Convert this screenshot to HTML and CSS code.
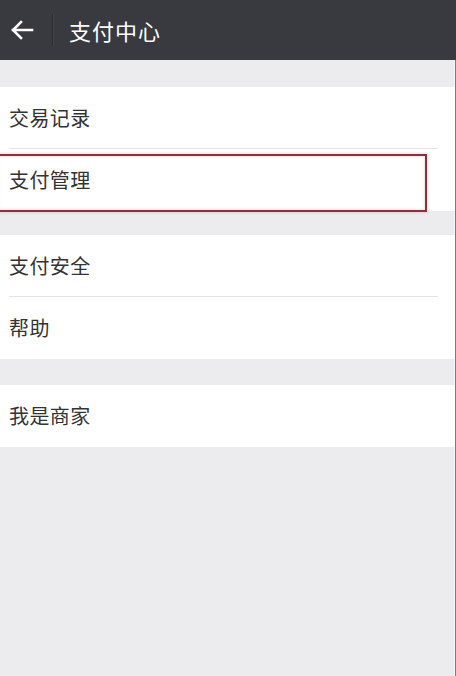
FILE: index.html
```html
<!DOCTYPE html>
<html lang="zh-CN">
<head>
<meta charset="utf-8">
<title>支付中心</title>
<link rel="stylesheet" href="styles.css">
</head>
<body>
<header class="topbar">
  <div class="back">
    <svg width="24" height="22" viewBox="0 0 24 22" aria-hidden="true">
      <path d="M22 11H3 M11 3L3 11L11 19" fill="none" stroke="#ffffff" stroke-width="2.6" stroke-linecap="square" stroke-linejoin="miter"/>
    </svg>
  </div>
  <div class="sep"></div>
  <h1 class="title">支付中心</h1>
</header>
<main class="content">
  <section class="group g1">
    <div class="row"><span class="label">交易记录</span></div>
    <div class="row last highlight"><span class="label">支付管理</span><div class="mark"></div></div>
  </section>
  <section class="group g2">
    <div class="row"><span class="label">支付安全</span></div>
    <div class="row last"><span class="label">帮助</span></div>
  </section>
  <section class="group g3">
    <div class="row last"><span class="label">我是商家</span></div>
  </section>
</main>
</body>
</html>
```
FILE: styles.css
```css
html, body {
  margin: 0;
  padding: 0;
  height: 100%;
}
body {
  background: #ecebed;
  font-family: "Noto Sans CJK SC", "Noto Sans", sans-serif;
  overflow: hidden;
}
.topbar {
  height: 60px;
  background: #393a3f;
  display: flex;
  align-items: center;
}
.back {
  width: 32px;
  padding-left: 10px;
  display: flex;
  align-items: center;
  height: 100%;
}
.back svg {
  display: block;
}
.sep {
  width: 1px;
  height: 32px;
  background: #2c2d31;
  box-shadow: 1px 0 0 #434449;
  margin-left: 10px;
}
.title {
  margin: 0 0 0 16px;
  font-size: 22px;
  font-weight: 400;
  color: #ffffff;
  letter-spacing: 1px;
  line-height: 1;
  padding-bottom: 1px;
}
.content {
  height: calc(100% - 60px);
  box-sizing: border-box;
  padding-top: 27px;
  border-right: 1px solid #7a7a7f;
  box-shadow: inset -1px 0 0 #f7f7f8;
}
.group {
  background: #ffffff;
}
.g2 { margin-top: 24px; }
.g3 { margin-top: 26px; }
.row {
  position: relative;
  height: 62px;
  display: flex;
  align-items: center;
  padding-left: 9px;
}
.row::after {
  content: "";
  position: absolute;
  left: 9px;
  right: 17px;
  bottom: 0;
  height: 1px;
  background: #e3e2e5;
}
.row.last::after {
  display: none;
}
.label {
  font-size: 20px;
  color: #333333;
  letter-spacing: 0.4px;
  line-height: 1;
}
.mark {
  position: absolute;
  left: -4px;
  top: 5px;
  width: 431px;
  height: 58px;
  box-sizing: border-box;
  border: 2px solid #83343f;
  box-shadow: 0 0 2px 1px rgba(235, 140, 155, 0.35), inset 0 0 2px 1px rgba(235, 140, 155, 0.3);
}
```
